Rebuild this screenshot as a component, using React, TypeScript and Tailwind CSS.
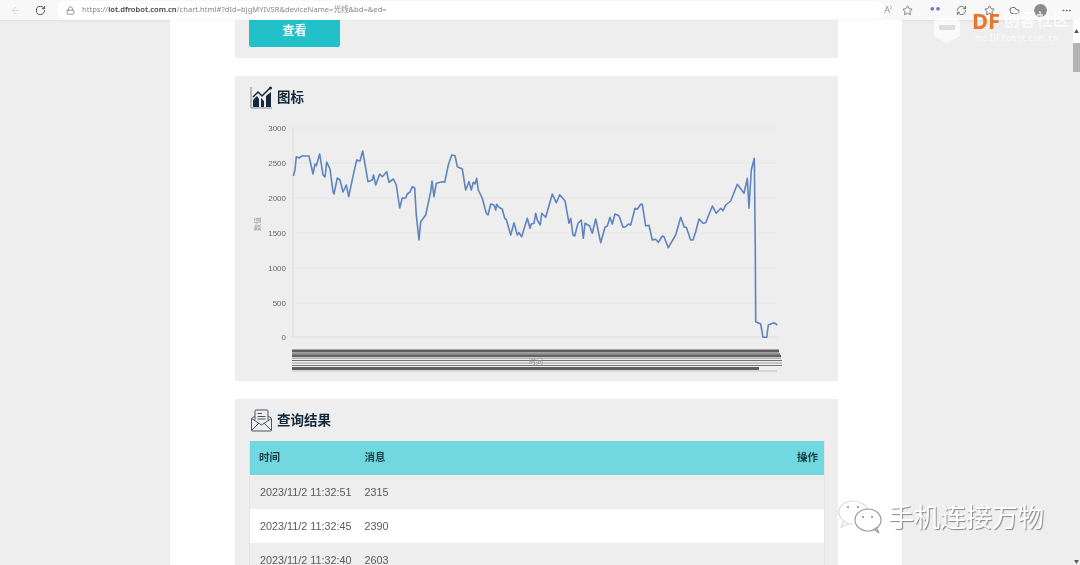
import { ArrowLeft, RotateCw, Lock, Star, MoreHorizontal, RefreshCw, Cloud } from "lucide-react";

const line =
  "294.3,176 296,170 297.3,156.7 300,158 303,156 310,156 314,174 316,164 317.3,165.7 320.7,154 324,175 326,177 327.7,162 331,169 334,191.7 335,194 338.3,178 341,180 344,192 347.3,185 349.7,196.7 355,171.7 357.7,160 361,161 363.7,151 369,181.7 373.3,180 374.5,175 376.7,185 380.7,174 383.3,176.7 387.7,171.7 390,182.3 394.3,179 397.3,185 400.7,208 403.3,198 406.7,198 408.3,194 411,192 413.3,186.7 415.7,188 417.3,215 420,240 421.7,221.7 426.7,215 431.7,191.7 433,181 435,196.7 437.3,183.3 443.3,181.7 445.7,182.3 449.3,165 452.7,155 456,155.7 458.3,166.7 463.3,169 466.7,190 470,181.7 472.3,190 474.3,182.3 476,184 477.7,178.3 479.3,190 483.3,198.3 487.3,213.3 489,215 491.7,204 495,205 496.7,210 497.7,204.3 500,207.3 503.3,209.3 505.7,218.3 507.3,219.5 511.7,235 515,222.7 518.3,235 520,232.7 522.7,236.7 528.3,218.3 531,228.3 532.3,224 535,223.3 536.7,213.3 538.3,220 541.3,225 542.7,213.3 546.7,217.3 553.3,194 557.3,202.7 560.7,194.7 566,200.7 570,223.3 571.7,218.3 574,235 575.7,236 579,223.3 582.3,220 584.3,238.3 586,223.3 590.7,226 593.3,233.3 596.7,219 601.7,242.7 606,227.3 608.3,226 611,217.3 613.3,224 616,214 620,215.7 624,227.3 626.7,226.7 629.3,224 631.7,225 636,208.3 638.3,209.3 641.7,204.3 643.3,204.3 646.7,226 650,225.3 653.3,240 656.7,239.3 659.3,242.3 663.3,236 665,236.7 669.3,247.7 676.7,235 681.7,217.3 685.3,227.3 687.3,227.3 691.7,240 694,240 696.7,231.7 700,219 704,223.3 706.7,222.7 713.3,206 717.3,213.3 721.7,208.3 724,210.7 726.7,205 731.7,201 738.3,184.3 745,193.3 748.3,178.3 750,208.3 752.3,170 755.3,158.3 756.3,250 756.7,321.7 761.7,324 764,337.3 767.7,337.3 769.3,325 775,322.7 778.3,325";

const ticks = [
  { label: "3000", y: 128 },
  { label: "2500", y: 163 },
  { label: "2000", y: 198 },
  { label: "1500", y: 233 },
  { label: "1000", y: 268 },
  { label: "500", y: 303 },
  { label: "0", y: 337 },
];

// the x axis labels overlap so much they read as a stack of dark stripes
const stripes = [
  { y: 351, w: 3, x2: 780, color: "#5c5c5c" },
  { y: 354, w: 1.5, x2: 781, color: "#707070" },
  { y: 356, w: 2.4, x2: 782, color: "#636363" },
  { y: 358.5, w: 0.8, x2: 782, color: "#a0a0a0" },
  { y: 360.5, w: 1.2, x2: 783, color: "#707070" },
  { y: 363, w: 0.8, x2: 783, color: "#8a8a8a" },
  { y: 365.5, w: 1.2, x2: 783, color: "#777777" },
  { y: 368.5, w: 3, x2: 760, color: "#606060" },
  { y: 371, w: 0.8, x2: 778, color: "#b5b5b5" },
];

const rows = [
  { time: "2023/11/2 11:32:51", value: "2315", bg: "bg-[#eeeeee]" },
  { time: "2023/11/2 11:32:45", value: "2390", bg: "bg-white" },
  { time: "2023/11/2 11:32:40", value: "2603", bg: "bg-[#eeeeee]" },
];

function ChartIcon() {
  return (
    <svg width="23" height="23" viewBox="0 0 23 23" fill="none">
      <path d="M1 1V22H22" stroke="#7f8c96" strokeWidth="1" />
      <path d="M3 21V14L7 10L9 13V21ZM11 21V12L14 15V21ZM16 21V10L21 6V21Z" fill="#14293c" />
      <path d="M3 11L8 6L12 10L20 2" stroke="#14293c" strokeWidth="1.5" />
      <circle cx="20.5" cy="2" r="1.5" fill="#14293c" />
    </svg>
  );
}

function MailIcon() {
  return (
    <svg width="23" height="23" viewBox="0 0 23 23" fill="none" stroke="#4a5660" strokeWidth="1">
      <path d="M1.5 9.5V21a1 1 0 0 0 1 1h18a1 1 0 0 0 1-1V9.5L18 7" />
      <path d="M5 7L1.5 9.5L11.5 16L21.5 9.5" />
      <path d="M5 11V2a1 1 0 0 1 1-1h11a1 1 0 0 1 1 1v9" />
      <path d="M1.500 21.500L9 14M21.500 21.500L14 14" />
      <path d="M7.500 4.500H12M7.500 7.500H15.500M7.500 10H15.500" />
    </svg>
  );
}

function WechatIcon() {
  return (
    <svg width="44" height="34" viewBox="0 0 44 34" fill="none" stroke="#dcdcdc" strokeWidth="1.2">
      <path d="M15 24C8 24 1 19 1 12S8 1 15 1s13 3.500 14.500 9" />
      <path d="M6 21L3 27L11 23.500" />
      <ellipse cx="30" cy="20" rx="13" ry="11" stroke="#9a9a9a" />
      <path d="M36 29L41 33L38 27" stroke="#9a9a9a" />
      <circle cx="10" cy="7" r="1" fill="#888888" stroke="none" />
      <circle cx="20" cy="7" r="1" fill="#888888" stroke="none" />
      <circle cx="25" cy="17" r="1" fill="#888888" stroke="none" />
      <circle cx="34" cy="17" r="1" fill="#888888" stroke="none" />
    </svg>
  );
}

function CardTitle({ title, icon }: { readonly title: string; readonly icon: React.ReactNode }) {
  return (
    <div className="flex h-[22px] items-center gap-[4px] pl-[1px]">
      {icon}
      <h2 className="text-[13.500px] font-bold text-[#14293c]">{title}</h2>
    </div>
  );
}

export default function App() {
  return (
    <div className="relative flex h-[565px] w-[1080px] flex-col overflow-hidden bg-[#eeeeee] font-['Noto_Sans','Noto_Sans_CJK_SC',sans-serif] blur-[0.35px]">
      {/* Browser toolbar */}
      <div className="flex h-[20px] shrink-0 items-center bg-[#f8f8f8] pl-[10px] pr-[8px] text-[#555555] shadow-[0_1px_2px_#dddddd]">
        <ArrowLeft size={11} className="text-[#d5d5d5]" />
        <RotateCw size={11} className="ml-[14px] text-[#444444]" />
        <div className="ml-[11px] flex h-[18px] w-[830px] items-center rounded-full bg-white pl-[9px]">
          <Lock size={9} className="text-[#777777]" />
          <span className="ml-[7px] text-[7.600px] text-[#888888]">
            https://<b className="font-semibold text-[#444444]">iot.dfrobot.com.cn</b>/chart.html#?dId=bjgMYIVSR&amp;deviceName=光线&amp;bd=&amp;ed=
          </span>
        </div>
        <span className="ml-[-1px] text-[9px] text-[#999999]">A⁾</span>
        <Star size={11} className="ml-[10px] text-[#777777]" />
        <span className="ml-[17px] text-[4px] tracking-[2px] text-[#7a70c8]">●●</span>
        <RefreshCw size={11} className="ml-[14px] text-[#666666]" />
        <Star size={11} className="ml-[17px] text-[#666666]" />
        <Cloud size={11} className="ml-[14px] text-[#555555]" />
        <span className="ml-[14px] h-[13px] w-[13px] rounded-full bg-[#8f8a8a]" />
        <MoreHorizontal size={11} className="ml-[14px] text-[#666666]" />
      </div>

      <div className="flex min-h-0 flex-1">
        <main className="ml-[170px] w-[732px] bg-white pl-[65px]">
          {/* Query card, cut off by the toolbar */}
          <section className="h-[38px] w-[603px] bg-[#eeeeee] pl-[14px]">
            <button className="flex h-[27px] w-[91px] items-center justify-center rounded-b-[2px] bg-[#22c0c8] pb-[6px] text-[12px] font-bold text-white">
              查看
            </button>
          </section>

          {/* Chart card */}
          <section className="mt-[18px] h-[305px] w-[603px] bg-[#eeeeee] pl-[14px] pt-[10px]">
            <CardTitle title="图标" icon={<ChartIcon />} />
            <svg width="540" height="258" viewBox="250 120 540 258" className="mt-[12px]">
              {ticks.map((tick) => (
                <g key={tick.label}>
                  <line x1="292" x2="778" y1={tick.y} y2={tick.y} stroke={tick.y === 337 ? "#dddddd" : "#e6e6e6"} strokeWidth="1" />
                  <text x="287" y={tick.y + 3} textAnchor="end" fontSize="8" fill="#666666" fontFamily="Liberation Sans, sans-serif">
                    {tick.label}
                  </text>
                </g>
              ))}
              <line x1="294" x2="294" y1="128" y2="338" stroke="#dddddd" />
              <text x="263" y="226" fontSize="7" fill="#999999" textAnchor="middle" transform="rotate(-90 261 226)" fontFamily="Noto Sans CJK SC, sans-serif">
                数值
              </text>
              {stripes.map((stripe) => (
                <line key={stripe.y} x1="293" x2={stripe.x2} y1={stripe.y} y2={stripe.y} stroke={stripe.color} strokeWidth={stripe.w} />
              ))}
              <text x="537" y="364" fontSize="7" fill="#999999" textAnchor="middle" fontFamily="Noto Sans CJK SC, sans-serif">
                时间
              </text>
              <polyline points={line} fill="none" stroke="#5f84bd" strokeWidth="1.6" strokeLinejoin="round" />
            </svg>
          </section>

          {/* Results card */}
          <section className="mt-[18px] w-[603px] bg-[#eeeeee] pl-[14px] pt-[10px]">
            <CardTitle title="查询结果" icon={<MailIcon />} />
            <table className="mt-[10px] w-[576px] table-fixed border-l border-r border-[#e4e4e4] font-['Liberation_Sans','Noto_Sans_CJK_SC',sans-serif] text-[10.800px]">
              <thead>
                <tr className="h-[34px] bg-[#70d8de] text-[10.500px] font-bold text-[#1d3c44]">
                  <th className="w-[115px] pl-[9px] text-left">时间</th>
                  <th className="text-left">消息</th>
                  <th className="pr-[6px] text-right">操作</th>
                </tr>
              </thead>
              <tbody className="text-[#5a5a5a]">
                {rows.map((row) => (
                  <tr key={row.time} className={`h-[34px] ${row.bg}`}>
                    <td className="whitespace-nowrap pl-[10px]">{row.time}</td>
                    <td>{row.value}</td>
                    <td />
                  </tr>
                ))}
              </tbody>
            </table>
          </section>
        </main>

        {/* Scrollbar */}
        <div className="ml-auto flex w-[7px] flex-col items-center bg-[#eeeeee] text-[5px] leading-none text-[#555555]">
          <div className="flex h-[23px] w-full items-center justify-center bg-white">▲</div>
          <div className="h-[29px] w-full bg-[#b2b2b2]" />
          <div className="mt-auto pb-[1px]">▼</div>
        </div>
      </div>

      {/* Site watermark */}
      <div className="absolute left-[934px] top-[8px] flex items-start gap-[12px]">
        <svg width="26" height="28" viewBox="0 0 26 28" className="mt-[7px]">
          <path d="M13 0L26 6V21L13 28L0 21V6Z" fill="#ffffff" fillOpacity="0.7" />
          <rect x="5" y="10" width="16" height="5" fill="#dddddd" />
        </svg>
        <div className="mt-[2px] leading-none">
          <div className="flex items-center text-[16.500px] font-bold leading-[20px]">
            <span className="text-[22px] text-[#e9742d]">DF</span>
            <span className="ml-[3px] text-white/70">创客社区</span>
          </div>
          <div className="ml-[3px] mt-[4px] text-[8px] tracking-[0.5px] text-white/70">mc.DFRobot.com.cn</div>
        </div>
      </div>

      {/* WeChat account watermark */}
      <div className="absolute left-[838px] top-[500px] flex items-center gap-[6px]">
        <WechatIcon />
        <span className="text-[26px] leading-none text-white [text-shadow:1px_1px_1px_#888888]">手机连接万物</span>
      </div>
    </div>
  );
}
